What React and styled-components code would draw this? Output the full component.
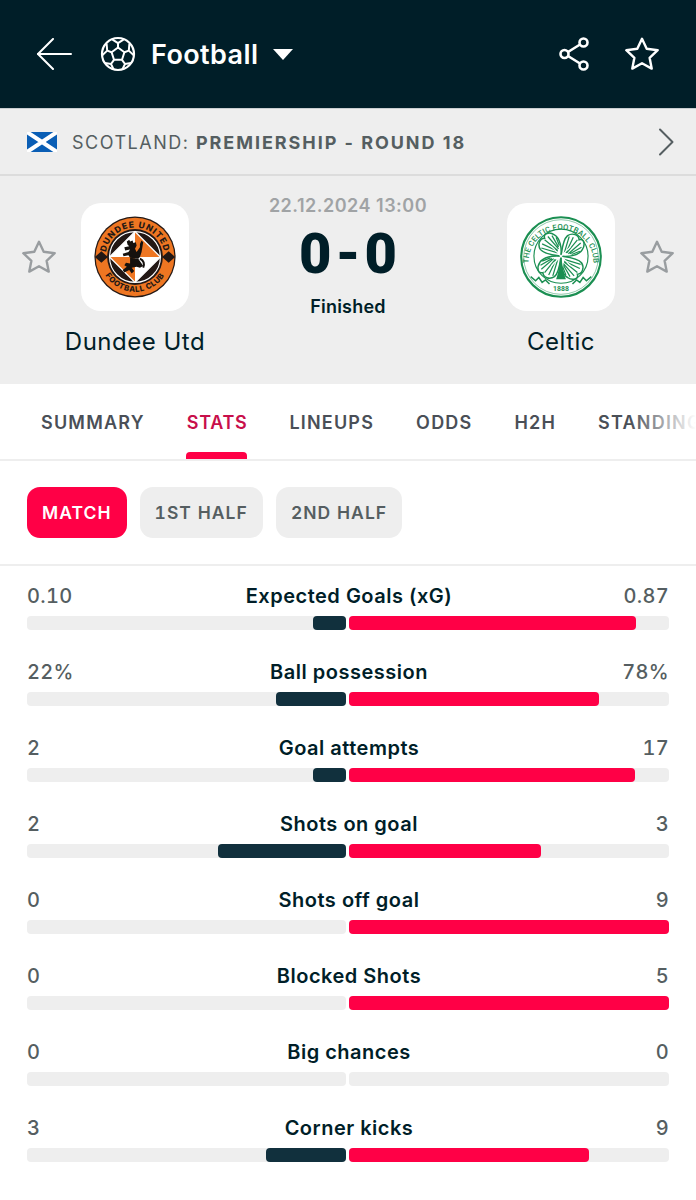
import React from "react";
import styled, { createGlobalStyle } from "styled-components";

const Global = createGlobalStyle`
  html, body { margin: 0; padding: 0; background: #fff; }
  body { font-family: Inter, "Noto Sans", "Liberation Sans", sans-serif; color: #001e28; }
  * { box-sizing: border-box; }
`;

const STATS = [
  { name: "Expected Goals (xG)", home: "0.10", away: "0.87", homePct: 10.3, awayPct: 89.7 },
  { name: "Ball possession", home: "22%", away: "78%", homePct: 22, awayPct: 78 },
  { name: "Goal attempts", home: "2", away: "17", homePct: 10.5, awayPct: 89.5 },
  { name: "Shots on goal", home: "2", away: "3", homePct: 40, awayPct: 60 },
  { name: "Shots off goal", home: "0", away: "9", homePct: 0, awayPct: 100 },
  { name: "Blocked Shots", home: "0", away: "5", homePct: 0, awayPct: 100 },
  { name: "Big chances", home: "0", away: "0", homePct: 0, awayPct: 0 },
  { name: "Corner kicks", home: "3", away: "9", homePct: 25, awayPct: 75 },
];

const TABS = ["SUMMARY", "STATS", "LINEUPS", "ODDS", "H2H", "STANDINGS"];
const PERIODS = ["MATCH", "1ST HALF", "2ND HALF"];

const StarIcon = ({ size = 34, color = "#fff", width = 2.4 }) => (
  <svg width={size} height={size} viewBox="0 0 34 34" fill="none">
    <path
      d="M17 1.8 L21.7 11.8 L32.7 13.2 L24.6 20.8 L26.7 31.6 L17 26.3 L7.3 31.6 L9.4 20.8 L1.3 13.2 L12.3 11.8 Z"
      stroke={color}
      strokeWidth={width}
      strokeLinejoin="round"
    />
  </svg>
);

const BackIcon = () => (
  <svg width="36" height="32" viewBox="0 0 36 32" fill="none" stroke="#fff" strokeWidth="2" strokeLinecap="round" strokeLinejoin="round">
    <path d="M17 1 L2 16 L17 31" />
    <path d="M2 16 H35" />
  </svg>
);

const BallIcon = () => (
  <svg width="36" height="36" viewBox="0 0 36 36" fill="none" stroke="#fff" strokeLinejoin="round">
    <circle cx="18" cy="18" r="16" strokeWidth="2.2" />
    <path d="M18 11.5 L24.4 16.2 L22 23.8 H14 L11.6 16.2 Z" strokeWidth="2" />
    <path d="M18 11.5 V7.2 L12.2 3.4 M18 7.2 L23.8 3.4" strokeWidth="2" />
    <path d="M24.4 16.2 L28.8 14.6 L29.4 7.8 M28.8 14.6 L33.8 19.4" strokeWidth="2" />
    <path d="M11.6 16.2 L7.2 14.6 L6.6 7.8 M7.2 14.6 L2.2 19.4" strokeWidth="2" />
    <path d="M22 23.8 L25 28 L31 27 M25 28 L22.4 33.4" strokeWidth="2" />
    <path d="M14 23.8 L11 28 L5 27 M11 28 L13.6 33.4" strokeWidth="2" />
  </svg>
);

const ShareIcon = () => (
  <svg width="32" height="34" viewBox="0 0 32 34" fill="none" stroke="#fff" strokeWidth="2.6">
    <circle cx="6.5" cy="17" r="4" />
    <circle cx="25.5" cy="5.5" r="4" />
    <circle cx="25.5" cy="28.5" r="4" />
    <path d="M10 15 L22 7.5 M10 19 L22 26.5" />
  </svg>
);

const Flag = () => (
  <svg width="30" height="20" viewBox="0 0 30 20">
    <rect width="30" height="20" fill="#0a5eb5" />
    <path d="M0 0 L30 20 M30 0 L0 20" stroke="#fff" strokeWidth="4" />
  </svg>
);

const Chevron = () => (
  <svg width="16" height="28" viewBox="0 0 16 28" fill="none" stroke="#555e61" strokeWidth="2" strokeLinecap="round" strokeLinejoin="round">
    <path d="M2 1.5 L14.5 14 L2 26.5" />
  </svg>
);

const DundeeCrest = () => (
  <svg width="82" height="82" viewBox="0 0 100 100">
    <defs>
      <path id="duTop" d="M 14 50 A 36 36 0 0 1 86 50" />
      <path id="duBottom" d="M 7.5 50 A 42.5 42.5 0 0 0 92.5 50" />
    </defs>
    <circle cx="50" cy="50" r="49.5" fill="#231815" />
    <circle cx="50" cy="50" r="48" fill="#ee7622" />
    <circle cx="50" cy="50" r="34" fill="#231815" />
    <circle cx="50" cy="50" r="31" fill="#231815" stroke="#fff" strokeWidth="1.4" />
    <path d="M50 19 L50 50 L19 50 Z" fill="#fff" />
    <path d="M50 19 L81 50 L50 50 Z" fill="#ee7622" />
    <path d="M50 50 L81 50 L50 81 Z" fill="#fff" />
    <path d="M50 50 L50 81 L19 50 Z" fill="#ee7622" />
    <path d="M50 19 L81 50 L50 81 L19 50 Z" fill="none" stroke="#fff" strokeWidth="1.6" />
    <path
      d="M40 31 L43 29 L44 31 L47 30 L48 33 L51 32 L52 36 L50 40 L52 44 L56 38 L56 34 L58 30 L60 32 L59 38 L58 44 L56 50 L54 52 L44 51 L42 48 L36 49 L35 46 L42 44 L44 41 L38 42 L37 38 L43 37 L41 35 Z"
      fill="#15110e"
    />
    <path
      d="M44 51 L54 52 L58 58 L60 61 L56 63 L52 62 L46 63 L49 67 L46 70 L43 66 L37 69 L35 66 L40 62 L37 60 L39 57 L44 58 Z"
      fill="#15110e"
    />
    <path d="M56 52 C60 54 62 58 60 63" fill="none" stroke="#15110e" strokeWidth="2.4" />
    <path d="M1 50 L9 43 L17 50 L9 57 Z" fill="#231815" />
    <path d="M83 50 L91 43 L99 50 L91 57 Z" fill="#231815" />
    <text fontFamily="Inter, sans-serif" fontSize="10.5" fontWeight="800" fill="#231815" letterSpacing="1.2">
      <textPath href="#duTop" startOffset="50%" textAnchor="middle">DUNDEE UNITED</textPath>
    </text>
    <text fontFamily="Inter, sans-serif" fontSize="9.5" fontWeight="800" fill="#231815" letterSpacing="0.6">
      <textPath href="#duBottom" startOffset="50%" textAnchor="middle">FOOTBALL CLUB</textPath>
    </text>
  </svg>
);

const Leaf = ({ angle }) => (
  <g transform={`rotate(${angle} 50 50)`}>
    <path
      d="M50 50 C44 49 30 48 25 42 C21 36 24 28 30 28 C28 22 36 20 42 24 C49 28 51 40 50 50 Z"
      fill="#fff"
      stroke="#1b8f52"
      strokeWidth="1.8"
    />
    <path
      d="M46 46 L26 40 M46 44 L27 35 M46 43 L30 30 M47 41 L34 26 M47 39 L39 25 M48 37 L44 27"
      stroke="#1b8f52"
      strokeWidth="1.5"
      fill="none"
    />
  </g>
);

const CelticCrest = () => (
  <svg width="82" height="82" viewBox="0 0 100 100">
    <defs>
      <path id="ceTop" d="M 10.5 56 A 39.5 39.5 0 1 1 89.5 56" />
    </defs>
    <circle cx="50" cy="50" r="48.5" fill="#fff" stroke="#1b8f52" strokeWidth="2.6" />
    <circle cx="50" cy="50" r="45.5" fill="none" stroke="#1b8f52" strokeWidth="0.6" />
    <circle cx="50" cy="49" r="33" fill="#fff" stroke="#1b8f52" strokeWidth="1.4" />
    <g transform="translate(0 -1)">
      <Leaf angle={0} />
      <Leaf angle={90} />
      <Leaf angle={180} />
      <Leaf angle={270} />
      <path d="M50 46 C49 58 47 70 44 78 H56 C53 70 51 58 50 46 Z" fill="#1b8f52" />
      <path d="M38 38 L62 62 M62 38 L38 62" stroke="#fff" strokeWidth="1.4" />
    </g>
    <text fontFamily="Roboto, sans-serif" fontSize="9.4" fontWeight="500" fill="#1b8f52" letterSpacing="0.15">
      <textPath href="#ceTop" startOffset="50%" textAnchor="middle">THE CELTIC FOOTBALL CLUB</textPath>
    </text>
    <text x="50" y="92" textAnchor="middle" fontFamily="Roboto, sans-serif" fontSize="8.4" fontWeight="700" fill="#1b8f52">1888</text>
    <path d="M13 74 L19 79 L23 75 L27 81 L31 78 L36 83" fill="none" stroke="#1b8f52" strokeWidth="1.8" />
    <path d="M87 74 L81 79 L77 75 L73 81 L69 78 L64 83" fill="none" stroke="#1b8f52" strokeWidth="1.8" />
  </svg>
);

const App = () => (
  <Page>
    <Global />
    <TopBar>
      <TopGroup>
        <BackIcon />
        <SportName>
          <BallIcon />
          <SportLabel>Football</SportLabel>
          <Caret />
        </SportName>
      </TopGroup>
      <TopActions>
        <ShareIcon />
        <StarIcon />
      </TopActions>
    </TopBar>

    <LeagueBar>
      <Flag />
      <LeagueText>
        SCOTLAND: <strong>PREMIERSHIP - ROUND 18</strong>
      </LeagueText>
      <LeagueArrow>
        <Chevron />
      </LeagueArrow>
    </LeagueBar>

    <MatchPanel>
      <SideStar>
        <StarIcon color="#999da0" />
      </SideStar>
      <Team>
        <LogoBox>
          <DundeeCrest />
        </LogoBox>
        <TeamName>Dundee Utd</TeamName>
      </Team>
      <Result>
        <MatchDate>22.12.2024 13:00</MatchDate>
        <Score>0-0</Score>
        <MatchStatus>Finished</MatchStatus>
      </Result>
      <Team>
        <LogoBox>
          <CelticCrest />
        </LogoBox>
        <TeamName>Celtic</TeamName>
      </Team>
      <SideStar>
        <StarIcon color="#999da0" />
      </SideStar>
    </MatchPanel>

    <TabBar>
      {TABS.map((t) => (
        <Tab key={t} $active={t === "STATS"}>
          {t}
        </Tab>
      ))}
      <TabFade />
    </TabBar>

    <PeriodRow>
      {PERIODS.map((p) => (
        <Period key={p} $active={p === "MATCH"}>
          {p}
        </Period>
      ))}
    </PeriodRow>

    <StatList>
      {STATS.map((s) => (
        <StatRow key={s.name}>
          <StatHead>
            <StatValue>{s.home}</StatValue>
            <StatName>{s.name}</StatName>
            <StatValue $right>{s.away}</StatValue>
          </StatHead>
          <Bars>
            <Track $side="home">
              <Fill $side="home" $pct={s.homePct} />
            </Track>
            <Track $side="away">
              <Fill $side="away" $pct={s.awayPct} />
            </Track>
          </Bars>
        </StatRow>
      ))}
    </StatList>
  </Page>
);

export default App;

const Page = styled.div`
  width: 696px;
  height: 1200px;
  overflow: hidden;
  background: #fff;
`;

const TopBar = styled.header`
  height: 109px;
  background: #001e28;
  border-bottom: 1px solid #c9ced1;
  display: flex;
  align-items: center;
  justify-content: space-between;
  padding: 0 37px 0 36px;
`;

const TopGroup = styled.div`
  display: flex;
  align-items: center;
  gap: 28px;
`;

const SportName = styled.div`
  display: flex;
  align-items: center;
`;

const SportLabel = styled.span`
  color: #fff;
  font-size: 27px;
  font-weight: 600;
  letter-spacing: 0.4px;
  margin-left: 15px;
`;

const Caret = styled.span`
  width: 0;
  height: 0;
  margin-left: 15px;
  border-left: 10px solid transparent;
  border-right: 10px solid transparent;
  border-top: 11px solid #fff;
`;

const TopActions = styled.div`
  display: flex;
  align-items: center;
  gap: 35px;
`;

const LeagueBar = styled.div`
  height: 67px;
  background: #eeeeee;
  border-bottom: 2px solid #dcdcdc;
  display: flex;
  align-items: center;
  padding: 0 22px 0 27px;
`;

const LeagueText = styled.div`
  margin-left: 15px;
  padding-top: 2px;
  font-size: 18px;
  letter-spacing: 1.5px;
  color: #555e61;
  white-space: nowrap;

  strong {
    font-weight: 700;
    letter-spacing: 1.95px;
  }
`;

const LeagueArrow = styled.div`
  margin-left: auto;
  display: flex;
`;

const MatchPanel = styled.section`
  height: 208px;
  background: #eeeeee;
  display: grid;
  grid-template-columns: 34px 158px 1fr 158px 34px;
  padding: 20px 22px 0;
`;

const SideStar = styled.div`
  margin-top: 44px;
`;

const Team = styled.div`
  display: flex;
  flex-direction: column;
  align-items: center;
  padding-top: 7px;
`;

const LogoBox = styled.div`
  width: 108px;
  height: 108px;
  border-radius: 20px;
  background: #fff;
  display: flex;
  align-items: center;
  justify-content: center;
`;

const TeamName = styled.div`
  margin-top: 16px;
  font-size: 24px;
  line-height: 30px;
  letter-spacing: 0.5px;
  color: #001e28;
  white-space: nowrap;
`;

const Result = styled.div`
  display: flex;
  flex-direction: column;
  align-items: center;
`;

const MatchDate = styled.div`
  font-size: 18px;
  line-height: 20px;
  font-weight: 600;
  color: #a0a3a5;
  letter-spacing: 0.5px;
`;

const Score = styled.div`
  margin-top: 7px;
  font-family: Roboto, sans-serif;
  font-size: 56px;
  line-height: 62px;
  font-weight: 900;
  letter-spacing: 4px;
  margin-right: -4px;
  color: #001e28;
`;

const MatchStatus = styled.div`
  margin-top: 11px;
  font-size: 18px;
  line-height: 22px;
  font-weight: 600;
  letter-spacing: 0.2px;
  color: #001e28;
`;

const TabBar = styled.nav`
  position: relative;
  height: 77px;
  background: #fff;
  border-bottom: 2px solid #eeeeee;
  display: flex;
  gap: 42px;
  padding-left: 41px;
  overflow: hidden;
`;

const Tab = styled.div`
  position: relative;
  flex: none;
  display: flex;
  align-items: center;
  height: 75px;
  padding-top: 2px;
  font-size: 18px;
  font-weight: 600;
  letter-spacing: ${(p) => (p.$active ? "0.7px" : "1.2px")};
  color: ${(p) => (p.$active ? "#c80f4b" : "#4a4f57")};

  ${(p) =>
    p.$active &&
    `
    &::after {
      content: "";
      position: absolute;
      left: -1px;
      right: 0;
      bottom: 0;
      height: 7px;
      border-radius: 4px 4px 0 0;
      background: #ff0046;
    }
  `}
`;

const TabFade = styled.div`
  position: absolute;
  right: 0;
  top: 0;
  bottom: 0;
  width: 66px;
  background: linear-gradient(to right, rgba(255, 255, 255, 0), #fff 100%);
`;

const PeriodRow = styled.div`
  height: 105px;
  border-bottom: 2px solid #eeeeee;
  display: flex;
  gap: 13px;
  padding: 26px 27px 0;
  align-items: flex-start;
`;

const Period = styled.div`
  height: 51px;
  padding: 0 15px;
  border-radius: 13px;
  display: flex;
  align-items: center;
  font-size: 17.5px;
  font-weight: 600;
  letter-spacing: 1.05px;
  font-feature-settings: "tnum";
  background: ${(p) => (p.$active ? "#ff0046" : "#eeeeee")};
  color: ${(p) => (p.$active ? "#fff" : "#555e61")};
`;

const StatList = styled.div`
  padding: 17px 27px 0;
`;

const StatRow = styled.div`
  height: 76px;
`;

const StatHead = styled.div`
  display: grid;
  grid-template-columns: 1fr auto 1fr;
  align-items: center;
  height: 26px;
  margin-bottom: 7px;
`;

const StatValue = styled.span`
  font-size: 20px;
  font-weight: 500;
  font-feature-settings: "tnum";
  letter-spacing: 0.3px;
  text-align: ${(p) => (p.$right ? "right" : "left")};
  color: #555e61;
`;

const StatName = styled.span`
  padding-left: 2px;
  font-size: 20px;
  font-weight: 600;
  letter-spacing: 0.5px;
  color: #001e28;
`;

const Bars = styled.div`
  display: grid;
  grid-template-columns: 319px 320px;
  gap: 3px;
`;

const Track = styled.div`
  height: 14px;
  border-radius: 4px;
  background: #eeeeee;
  display: flex;
  justify-content: ${(p) => (p.$side === "home" ? "flex-end" : "flex-start")};
`;

const Fill = styled.div`
  width: ${(p) => p.$pct}%;
  height: 100%;
  border-radius: 4px;
  background: ${(p) => (p.$side === "home" ? "#11303d" : "#ff0046")};
`;
